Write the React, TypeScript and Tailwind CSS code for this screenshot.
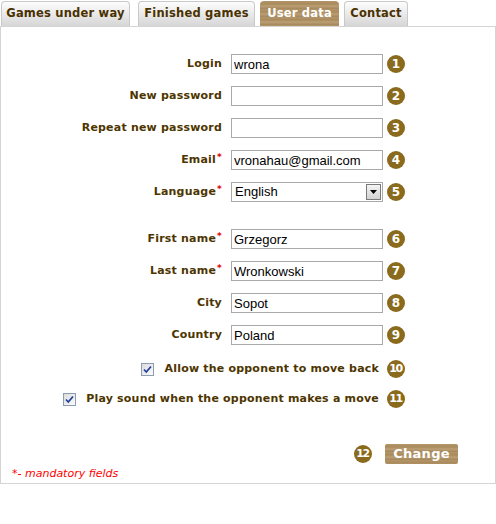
import React from 'react';

const font = "font-['DejaVu_Sans',Verdana,sans-serif]";

const Num: React.FC<{ n: number }> = ({ n }) => (
  <div
    className={`w-[18px] h-[18px] rounded-full bg-[#8a6a1c] text-white font-bold flex items-center justify-center shrink-0 ${font} ${
      n > 9 ? 'text-[11px] tracking-[-1.5px] pr-[1px]' : 'text-[12px]'
    }`}
  >
    {n}
  </div>
);

const Check: React.FC = () => (
  <div className="w-[13px] h-[13px] border border-[#8c9cb2] bg-gradient-to-br from-[#dcdcdc] to-[#fbfbfb] flex items-center justify-center shrink-0">
    <svg width="9" height="9" viewBox="0 0 9 9">
      <path d="M1 4.5 L3.3 7 L8 1.5" fill="none" stroke="#21429a" strokeWidth="1.8" />
    </svg>
  </div>
);

const Label: React.FC<{ text: string; req?: boolean }> = ({ text, req }) => (
  <div className={`w-[221px] text-right text-[11px] font-bold text-[#4d3500] tracking-[0.2px] ${font}`}>
    {text}
    {req && <span className="text-[#e00000] relative -top-[3px] text-[9px] ml-[1px]">*</span>}
  </div>
);

const Field: React.FC<{ label: string; value?: string; req?: boolean; n: number; className?: string }> = ({
  label,
  value = '',
  req,
  n,
  className = '',
}) => (
  <div className={`flex items-center h-[20px] ${className}`}>
    <Label text={label} req={req} />
    <input
      readOnly
      value={value}
      className="ml-[9px] w-[152px] h-[20px] border border-[#a9a9a9] px-[2px] text-[13px] text-black font-['Liberation_Sans',Arial,sans-serif] outline-none"
    />
    <div className="ml-[4px]">
      <Num n={n} />
    </div>
  </div>
);

const tabBase = `h-[25px] rounded-t-[4px] flex items-center justify-center text-[11.5px] font-bold tracking-[0.2px] ${font}`;
const tabIdle = `${tabBase} border border-b-0 border-[#c9c9c9] bg-gradient-to-b from-[#fdfdfd] to-[#d6d6d6] text-[#4a3100]`;
const wood = 'bg-[repeating-linear-gradient(180deg,#b39569_0px,#a88a5c_3px,#bc9f74_5px,#a3855a_8px)]';

export default function App() {
  return (
    <div className="w-[496px] h-[524px] bg-white">
      {/* Tabs */}
      <div className="flex items-end h-[26px] pl-[1px]">
        <div className={`${tabIdle} w-[129px]`}>Games under way</div>
        <div className={`${tabIdle} w-[117px] ml-[8px]`}>Finished games</div>
        <div className={`${tabBase} w-[79px] ml-[5px] text-white ${wood}`}>User data</div>
        <div className={`${tabIdle} w-[64px] ml-[5px]`}>Contact</div>
      </div>

      {/* Panel */}
      <div className="border border-[#d4d4d4] pt-[27px] pb-[3px]">
        <div className="w-[404px] flex flex-col gap-[12px]">
          <Field label="Login" value="wrona" n={1} />
          <Field label="New password" n={2} />
          <Field label="Repeat new password" n={3} />
          <Field label="Email" req value="vronahau@gmail.com" n={4} />
          <div className="flex items-center h-[20px]">
            <Label text="Language" req />
            <div className="ml-[9px] w-[152px] h-[20px] border border-[#a9a9a9] flex items-center justify-between pl-[3px] pr-[1px] text-[13px] text-black font-['Liberation_Sans',Arial,sans-serif]">
              <span>English</span>
              <div className="w-[15px] h-[16px] border border-[#7a7a7a] bg-gradient-to-b from-[#f4f4f4] to-[#d2d2d2] flex items-center justify-center">
                <svg width="7" height="4" viewBox="0 0 7 4">
                  <path d="M0 0 H7 L3.5 4 Z" fill="#000" />
                </svg>
              </div>
            </div>
            <div className="ml-[4px]">
              <Num n={5} />
            </div>
          </div>

          <Field className="mt-[15px]" label="First name" req value="Grzegorz" n={6} />
          <Field label="Last name" req value="Wronkowski" n={7} />
          <Field label="City" value="Sopot" n={8} />
          <Field label="Country" value="Poland" n={9} />

          <div className="flex items-center justify-end h-[20px] mt-[2px]">
            <Check />
            <span className={`ml-[10px] text-[11px] font-bold text-[#4d3500] tracking-[0.2px] ${font}`}>
              Allow the opponent to move back
            </span>
            <div className="ml-[8px]">
              <Num n={10} />
            </div>
          </div>
          <div className="flex items-center justify-end h-[20px] -mt-[2px]">
            <Check />
            <span className={`ml-[10px] text-[11px] font-bold text-[#4d3500] tracking-[0.2px] ${font}`}>
              Play sound when the opponent makes a move
            </span>
            <div className="ml-[8px]">
              <Num n={11} />
            </div>
          </div>
        </div>

        <div className="flex items-center h-[20px] mt-[35px] pl-[353px]">
          <Num n={12} />
          <button
            className={`ml-[13px] w-[73px] h-[20px] rounded-[2px] text-white text-[13px] font-bold tracking-[0.3px] ${font} ${wood}`}
          >
            Change
          </button>
        </div>

        <div className="mt-[3px] pl-[11px] h-[13px] text-[11px] leading-[13px] italic text-[#ff0000] font-['DejaVu_Sans',sans-serif]">
          *- mandatory fields
        </div>
      </div>
    </div>
  );
}
